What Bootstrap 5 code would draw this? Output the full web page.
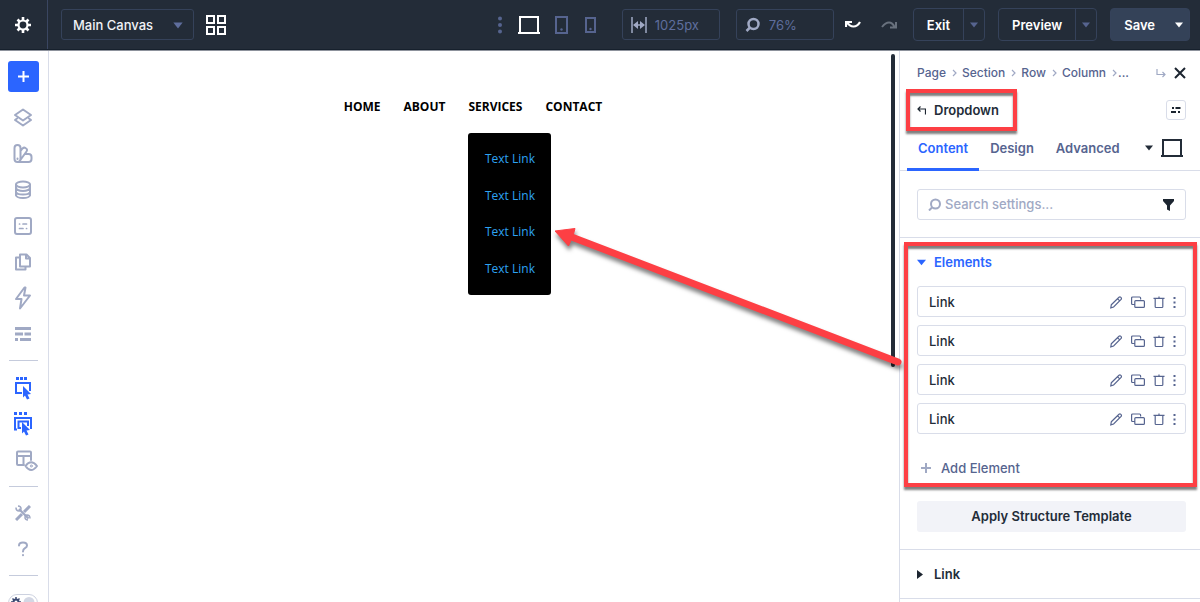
<!DOCTYPE html>
<html lang="en">
<head>
<meta charset="utf-8">
<meta name="viewport" content="width=device-width, initial-scale=1">
<title>Main Canvas</title>
<link href="https://cdn.jsdelivr.net/npm/bootstrap@5.3.0/dist/css/bootstrap.min.css" rel="stylesheet">
<style>
  :root { --ink:#232c38; --line:#d9dde9; --slate:#56648f; --mute:#a0a9c4; --blue:#2b65ff; --edge:#35425a; --alert:#fd3f44; }
  body { font-family:Inter, "Liberation Sans", sans-serif; font-size:13px; line-height:20px; font-weight:500; color:var(--ink); background:#fff; }
  button, input, select { font:inherit; color:inherit; }
  svg { display:block; flex:none; }
  .ico { fill:none; stroke:currentColor; stroke-width:2; stroke-linecap:round; stroke-linejoin:round; }
  .plain { background:none; border:0; padding:0; }

  /* top bar */
  .topbar { background:var(--ink); height:50px; border-bottom:1px solid #16202c; color:#fff; box-shadow:0 1px 0 #8d929c; z-index:2; }
  .gear-cell { width:48px; border-right:1px solid #3a4661; padding-right:1px; }
  .box { border:1px solid var(--edge); border-radius:3px; height:31px; color:var(--slate); }
  .canvas-pick { width:133px; position:relative; color:#fff; margin:0 12px 0 13px; }
  .canvas-pick select { appearance:none; background:none; border:0; width:100%; height:100%; padding:0 11px; color:#f0f2f6; }
  .canvas-pick svg { position:absolute; right:10px; top:12px; pointer-events:none; }
  .views { gap:15px; padding-right:24px; }
  .boxes { gap:16px; }
  .history { gap:20px; padding:0 16px 0 11px; }
  .actions { gap:13px; padding-right:10px; }
  .num-box { width:98px; }
  .num-box input { background:none; border:0; width:100%; min-width:0; padding:0; font-weight:400; color:#5f6e9d; }
  .top-btn { height:33px; border:1px solid var(--edge); border-radius:4px; overflow:hidden; font-weight:600; }
  .top-btn .wide { padding:0 13px; }
  .top-btn .arrow { width:21px; border-left:1px solid var(--edge); color:var(--slate); }
  .top-btn.filled { background:#344258; }
  .top-btn.filled .arrow { color:#fff; border-left:0; }

  /* left rail */
  .rail { width:49px; border-right:1px solid var(--line); padding:11px 2px 0 0; color:var(--mute); }
  .rail > * { flex:none; }
  .add-btn { width:31px; height:31px; background:var(--blue); border-radius:3px; color:#fff; margin-bottom:8px; }
  .rail-btn { width:46px; height:36px; display:flex; align-items:center; justify-content:center; color:inherit; }
  .rail-btn.on { color:var(--blue); }
  .rail hr { width:29px; margin:8px 0; border-top:1px solid #c5cbdc; opacity:1; }
  .rail hr:first-of-type { margin-bottom:9px; }
  .theme-switch { margin-top:10px; }

  /* canvas */
  .stage { position:relative; padding:47px 2px 0 0; }
  .site-nav { font:700 12px/20px "Open Sans", sans-serif; gap:23px; }
  .site-nav a { color:#000; text-decoration:none; display:block; }
  .submenu { position:absolute; top:36px; left:0; width:83px; height:162px; background:#000; border-radius:3px; padding:16px 0; font-weight:400; }
  .submenu a { color:#2ea3f2; text-align:center; }
  .thumb { position:absolute; right:4px; top:4px; width:4px; height:313px; border-radius:2px; background:var(--ink); }
  .pointer { position:absolute; right:-8px; top:174px; z-index:3; filter:drop-shadow(1px 4px 2px rgba(0,0,0,.5)); }

  /* settings panel */
  .panel { width:301px; border-left:1px solid var(--line); }
  .pad { padding-left:17px; padding-right:14px; }
  .crumbs { height:20px; margin-top:13px; color:var(--slate); font-size:12px; }
  .crumbs a { color:inherit; text-decoration:none; }
  .title-row { height:20px; margin-top:17px; font-weight:600; }
  .marked { position:relative; }
  .marked::after { content:""; position:absolute; inset:-11px -18px -11px -11px; border:4px solid var(--alert); box-shadow:0 3px 2px rgba(0,0,0,.5), inset 0 3px 2px rgba(0,0,0,.5); pointer-events:none; z-index:3; }
  .mini-box { width:20px; height:20px; border:1px solid var(--line); border-radius:3px; }
  .tab-row { margin-top:14px; height:37px; border-bottom:1px solid var(--line); padding-left:7px; padding-right:17px; }
  .tab-row .nav-link { padding:4px 11px 0; height:37px; color:var(--slate); font-weight:600; border-bottom:3px solid transparent; border-radius:0; }
  .tab-row .nav-link.active { color:var(--blue); border-color:var(--blue); }
  .device { height:28px; }
  .search-box { height:31px; border:1px solid var(--line); border-radius:3px; padding:0 10px; margin-top:18px; }
  .search-box input { border:0; padding:0 0 1px; outline:0; min-width:0; }
  .search-box input::placeholder { color:var(--mute); opacity:1; }
  .rule { border-top:1px solid var(--line); }
  .elements { margin-top:17px; position:relative; padding-top:14px; }
  .elements.marked::after { inset:4px 3px -9px 4px; }
  .sect { font-weight:600; gap:8px; }
  .sect.open { color:var(--blue); }
  .sect.closed { padding-top:14px; padding-bottom:14px; }
  .items { margin-top:14px; gap:8px; }
  .item { height:31px; border:1px solid var(--line); border-radius:3px; padding:0 9px 0 11px; }
  .item .tools { gap:8px; color:var(--slate); }
  .item button { color:inherit; padding-top:1px; }
  .add-el { margin-top:24px; color:var(--slate); gap:10px; }
  .apply { height:31px; width:100%; background:#f2f3f8; border-radius:3px; font-weight:600; margin:23px 0 17px; padding-bottom:1px; }
</style>
</head>
<body>
<svg width="0" height="0" class="position-absolute" aria-hidden="true">
  <symbol id="down" viewBox="0 0 8 6"><path d="M0 .5h8L4 5.5z" fill="currentColor"/></symbol>
  <symbol id="laptop" viewBox="0 0 22 18"><path d="M2 16V1h18v15M0 17h22" fill="none" stroke="currentColor" stroke-width="2"/></symbol>
  <symbol id="next" viewBox="0 0 8 8"><path d="m3 1 3 3-3 3" fill="none" stroke="#a0a9c4" stroke-width="1.2"/></symbol>
  <symbol id="pencil" viewBox="0 0 13 13"><path d="M1.3 8.8 9 1.3q.9-.8 1.9.1t.2 2L3.6 11l-2.8.8zM7.7 2.8l2 2" fill="none" stroke="currentColor" stroke-width="1.2"/></symbol>
  <symbol id="dup" viewBox="0 0 14 13"><path d="M3.500 8.500H1.600a1 1 0 0 1-1-1V2a1 1 0 0 1 1-1h7a1 1 0 0 1 1 1v1.500M4.800 4.600h7.600a1 1 0 0 1 1 1v4.800a1 1 0 0 1-1 1H4.800a1 1 0 0 1-1-1V5.600a1 1 0 0 1 1-1z" fill="none" stroke="currentColor" stroke-width="1.2"/></symbol>
  <symbol id="bin" viewBox="0 0 12 13"><path d="M.5 2.300h11M6 .5v1.800M2.200 2.500v8.200q0 .8.800.8h6q.8 0 .8-.8V2.500" fill="none" stroke="currentColor" stroke-width="1.2"/></symbol>
  <symbol id="dots" viewBox="0 0 3 13"><path d="M.5 1h2v2h-2zM.5 5.500h2v2h-2zM.5 10h2v2h-2z" fill="currentColor"/></symbol>
</svg>
<div class="d-flex flex-column vh-100 overflow-hidden">
  <header class="topbar d-flex align-items-center justify-content-between flex-shrink-0">
    <div class="d-flex align-items-center h-100">
      <div class="gear-cell h-100 d-flex align-items-center justify-content-center">
        <button class="plain" aria-label="Settings"><svg width="16" height="16" viewBox="0 0 16 16"><circle cx="8" cy="8" r="4.500" fill="none" stroke="#fff" stroke-width="2.200"/><path d="M8 0v3M8 13v3M0 8h3M13 8h3M2.500 2.500l2 2M11.500 11.500l2 2M13.500 2.500l-2 2M2.500 13.500l2-2" stroke="#fff" stroke-width="2.600"/></svg></button>
      </div>
      <div class="box canvas-pick">
        <select aria-label="Canvas"><option>Main Canvas</option></select>
        <svg width="10" height="7" color="#5f6e9d"><use href="#down"/></svg>
      </div>
      <button class="plain" aria-label="Canvas grid"><svg width="20" height="20" viewBox="0 0 20 20" fill="none" stroke="#fff" stroke-width="2"><path d="M1 1h7v7H1zM12 1h7v7h-7zM1 12h7v7H1zM12 12h7v7h-7z"/></svg></button>
    </div>
    <div class="d-flex align-items-center">
      <div class="views d-flex align-items-center">
        <button class="plain" aria-label="More views"><svg width="6" height="18" viewBox="0 0 6 18" fill="#56648f"><circle cx="3" cy="2.500" r="2"/><circle cx="3" cy="9" r="2"/><circle cx="3" cy="15.500" r="2"/></svg></button>
        <button class="plain text-white" aria-label="Desktop"><svg width="22" height="18"><use href="#laptop"/></svg></button>
        <button class="plain" aria-label="Tablet"><svg width="14" height="18" viewBox="0 0 14 18"><path d="M1 1h11v16H1z" fill="none" stroke="#56648f" stroke-width="2"/><circle cx="6.500" cy="13.500" r="1.200" fill="#56648f"/></svg></button>
        <button class="plain" aria-label="Phone"><svg width="14" height="18" viewBox="0 0 14 18"><path d="M2 2h9v14H2z" fill="none" stroke="#56648f" stroke-width="2"/><circle cx="6.500" cy="13" r="1.200" fill="#56648f"/></svg></button>
      </div>
      <div class="boxes d-flex">
        <label class="box num-box d-flex align-items-center ps-2 gap-2"><svg width="16" height="16" viewBox="0 0 16 16"><path d="M1 0v16M15 0v16M3 8h10" stroke="#a0a9c4" stroke-width="1.500"/><path d="M2 8l5-4v8zM14 8 9 4v8z" fill="#a0a9c4"/></svg><input value="1025px" aria-label="Width"></label>
        <label class="box num-box d-flex align-items-center ps-2 gap-2"><svg width="16" height="16" viewBox="0 0 16 16" fill="none" stroke="#a0a9c4" stroke-width="2.500"><circle cx="8.500" cy="7" r="5"/><path d="M5 10.500 1.500 14"/></svg><input value="76%" aria-label="Zoom"></label>
      </div>
      <div class="history d-flex align-items-center">
        <button class="plain" aria-label="Undo"><svg width="16" height="10" viewBox="0 0 16 10"><path d="M1 1v6M1 2h6M2 2q2.500 4.500 6.500 4.500T15 2" fill="none" stroke="#fff" stroke-width="2.200"/></svg></button>
        <button class="plain" aria-label="Redo"><svg width="16" height="10" viewBox="0 0 16 10"><path d="M15 2v6.500M9 7.500h6.500M13.500 7Q11.500 2.500 8 2.500T1 7" fill="none" stroke="#68717d" stroke-width="2"/></svg></button>
      </div>
      <div class="actions d-flex">
        <div class="top-btn d-flex"><button class="plain wide">Exit</button><button class="plain arrow d-flex align-items-center justify-content-center" aria-label="Exit options"><svg width="8" height="6"><use href="#down"/></svg></button></div>
        <div class="top-btn d-flex"><button class="plain wide">Preview</button><button class="plain arrow d-flex align-items-center justify-content-center" aria-label="Preview options"><svg width="8" height="6"><use href="#down"/></svg></button></div>
        <div class="top-btn filled d-flex"><button class="plain wide">Save</button><button class="plain arrow d-flex align-items-center justify-content-center" aria-label="Save options"><svg width="8" height="6"><use href="#down"/></svg></button></div>
      </div>
    </div>
  </header>

  <div class="d-flex flex-grow-1 overflow-hidden">
    <nav class="rail d-flex flex-column align-items-center flex-shrink-0 overflow-hidden" aria-label="Tools">
      <button class="plain add-btn d-flex align-items-center justify-content-center" aria-label="Add"><svg width="11" height="11" viewBox="0 0 11 11"><path d="M5.500 0v11M0 5.500h11" stroke="#fff" stroke-width="2"/></svg></button>
      <button class="plain rail-btn" aria-label="Layers"><svg class="ico" width="20" height="20" viewBox="0 0 20 20"><path d="M10 1.500 18 7l-8 5.500L2 7zM4 10.500 2 12l8 5.500 8-5.500-2-1.500"/></svg></button>
      <button class="plain rail-btn" aria-label="Presets"><svg class="ico" width="20" height="20" viewBox="0 0 20 20"><path d="M1.500 4a2.500 2.500 0 0 1 6 0v11a3 3 0 0 1-6 0zM8 6.500l1.500-2q1.500-1.500 3-.5 2.500 1.500 1 3.500L7 16.500M13 10h2.500a3 3 0 0 1 3 3v2q0 3-3 3h-11M4.500 14.500v.5"/></svg></button>
      <button class="plain rail-btn" aria-label="Data"><svg class="ico" width="18" height="20" viewBox="0 0 18 20"><ellipse cx="9" cy="4.500" rx="7" ry="3"/><path d="M2 4.500v11Q3 18 9 18t7-2.500v-11M2 8.200Q3 11 9 11t7-2.800M2 12Q3 14.600 9 14.600T16 12"/></svg></button>
      <button class="plain rail-btn" aria-label="Fields"><svg class="ico" width="18" height="18" viewBox="0 0 18 18"><rect x="1" y="1" width="16" height="16" rx="2"/><path d="M5.500 7h.1M9 7h3.500M5.500 11.500H9M12.500 11.500h.1" stroke-width="1.700"/></svg></button>
      <button class="plain rail-btn" aria-label="Pages"><svg class="ico" width="18" height="20" viewBox="0 0 18 20"><path d="M6 2.500h6.500L16 6v8.500H6zM12 3v3.500h4M5.500 5.500H2v12h9.500V15"/></svg></button>
      <button class="plain rail-btn" aria-label="Interactions"><svg class="ico" width="18" height="24" viewBox="0 0 18 24"><path d="M10.500 1.500 2 13h5.500L6 22.500 16 9.500h-6l1.500-8z"/></svg></button>
      <button class="plain rail-btn" aria-label="Outline"><svg width="16" height="16" viewBox="0 0 16 16" stroke="currentColor" stroke-width="3"><path d="M0 2.500h16M0 8h8M9.500 8H16M0 13.500h3M5 13.500h11"/></svg></button>
      <hr>
      <button class="plain rail-btn on" aria-label="Select"><svg width="18" height="24" viewBox="0 0 18 24"><path d="M2 2.500h3M6 2.500h3M10 2.500h3" stroke="currentColor" stroke-width="3"/><path d="M8 17H2V7h14v8" fill="none" stroke="currentColor" stroke-width="2"/><path d="m9 10 8 8-3.500.5 2 4-2.500 1-2-4-2 2z" fill="currentColor"/></svg></button>
      <button class="plain rail-btn on" aria-label="Multi select"><svg width="20" height="26" viewBox="0 0 20 26"><path d="M1 2.500h3M6 2.500h3M11 2.500h3" stroke="currentColor" stroke-width="3"/><path d="M4 18.500H2V7h16v11M8 17H5.500v-6.500H15V15" fill="none" stroke="currentColor" stroke-width="2"/><path d="m9 11 8 8-3.500.5 2 4-2.500 1-2-4-2 2z" fill="currentColor"/></svg></button>
      <button class="plain rail-btn" aria-label="Layout view"><svg class="ico ms-2" width="24" height="22" viewBox="0 0 24 22"><path d="M9 16H3q-1 0-1-1V3.500q0-1 1-1h12q1 0 1 1V11M2 7h14M8.500 7v9"/><path d="M10.500 17Q16 9.500 22 17q-6 8-11.500 0z"/><circle cx="16.300" cy="17" r="1" stroke-width="1"/></svg></button>
      <hr>
      <button class="plain rail-btn" aria-label="Utilities"><svg width="16" height="16" viewBox="0 0 16 16" fill="none" stroke="currentColor"><path d="M4 4l9.500 9.500" stroke-width="2.200"/><path d="M1 15 7 9M9 7l6-6" stroke-width="3"/><path d="M1 2.500q0 3.500 3 3.500 2-.2 2-2.500T3 1M15 13.500q0-3.500-3-3.500-2 .2-2 2.500t3 2.500" stroke-width="1.500"/></svg></button>
      <button class="plain rail-btn" aria-label="Help"><svg class="ico" width="12" height="16" viewBox="0 0 12 16"><path d="M2 4.500Q2 1.500 6 1.500t4 3Q10 6 8 7.200T6 10.500M6 14v.3"/></svg></button>
      <hr>
      <button class="plain theme-switch" aria-label="Theme"><svg width="30" height="18" viewBox="0 0 30 18"><rect x=".5" y=".5" width="29" height="17" rx="8.500" fill="#fff" stroke="#cdd2e0"/><circle cx="21" cy="8.500" r="5.500" fill="#d3d7e4"/><circle cx="8" cy="8" r="2.500" fill="none" stroke="#3c4a72" stroke-width="2"/><path d="M8 3v2M8 11v2M3 8h2M11 8h2M4.500 4.500 6 6M10 10l1.500 1.500M11.500 4.500 10 6M4.500 11.500 6 10" stroke="#3c4a72" stroke-width="1.500"/></svg></button>
    </nav>

    <main class="stage flex-grow-1">
      <ul class="site-nav list-unstyled d-flex justify-content-center m-0">
        <li><a href="#">HOME</a></li>
        <li><a href="#">ABOUT</a></li>
        <li class="position-relative"><a href="#">SERVICES</a>
          <div class="submenu d-flex flex-column justify-content-between"><a href="#">Text Link</a><a href="#">Text Link</a><a href="#">Text Link</a><a href="#">Text Link</a></div>
        </li>
        <li><a href="#">CONTACT</a></li>
      </ul>
      <div class="thumb"></div>
      <svg class="pointer" width="352" height="150" viewBox="0 0 352 150"><path d="M14 12 343 138" stroke="#fd3f44" stroke-width="7" stroke-linecap="round"/><path d="M0 7 20 4.500 18 12 13.500 22z" fill="#fd3f44" stroke="#fd3f44"/></svg>
    </main>

    <aside class="panel flex-shrink-0">
      <div class="pad crumbs d-flex align-items-center justify-content-between">
        <div class="d-flex align-items-center gap-1">
          <a href="#">Page</a><svg width="8" height="8"><use href="#next"/></svg>
          <a href="#">Section</a><svg width="8" height="8"><use href="#next"/></svg>
          <a href="#">Row</a><svg width="8" height="8"><use href="#next"/></svg>
          <a href="#">Column</a><span class="d-flex align-items-center"><svg width="8" height="8"><use href="#next"/></svg>...</span>
        </div>
        <div class="d-flex align-items-center gap-2">
          <svg width="10" height="9" viewBox="0 0 10 9" fill="none" stroke="#a0a9c4" stroke-width="1.200"><path d="M1 0v5.500h8M6.500 3 9 5.500 6.500 8"/></svg>
          <button class="plain" aria-label="Close"><svg width="12" height="12" viewBox="0 0 12 12" stroke="#1c2530" stroke-width="2"><path d="m1 1 10 10M11 1 1 11"/></svg></button>
        </div>
      </div>
      <div class="pad title-row d-flex align-items-center justify-content-between">
        <button class="plain marked d-flex align-items-center gap-2"><svg width="9" height="9" viewBox="0 0 9 9" fill="none" stroke="#1c2530" stroke-width="1.200"><path d="M8.500 8.500V3H1M3.500.5 1 3l2.500 2.500"/></svg>Dropdown</button>
        <button class="plain mini-box d-flex align-items-center justify-content-center" aria-label="Options"><svg width="10" height="8" viewBox="0 0 10 8" stroke="#1c2530" stroke-width="2"><path d="M1 2h2M4.500 2h5M0 6h5M7 6h2"/></svg></button>
      </div>
      <div class="tab-row d-flex justify-content-between">
        <div class="nav flex-nowrap"><a class="nav-link active" href="#">Content</a><a class="nav-link" href="#">Design</a><a class="nav-link" href="#">Advanced</a></div>
        <button class="plain device d-flex align-items-center gap-2" aria-label="Device"><svg width="8" height="6"><use href="#down"/></svg><svg width="22" height="18"><use href="#laptop"/></svg></button>
      </div>
      <div class="pad">
        <label class="search-box d-flex align-items-center gap-1 w-100"><svg width="13" height="13" viewBox="0 0 13 13" fill="none" stroke="#a0a9c4" stroke-width="2"><circle cx="7.500" cy="6" r="4.500"/><path d="M4 9.500 1 12.500"/></svg><input class="flex-grow-1" placeholder="Search settings..." aria-label="Search settings"><svg width="13" height="12" viewBox="0 0 13 12" fill="#1c2530"><path d="M1 0h11v2L8 6.500V12l-3-1.500v-4L1 2z"/></svg></label>
      </div>
      <section class="elements marked rule pad">
        <div class="sect open d-flex align-items-center"><svg width="9" height="7"><use href="#down"/></svg>Elements</div>
        <div class="items d-flex flex-column" id="items"></div>
        <button class="plain add-el d-flex align-items-center"><svg class="ms-1" width="10" height="10" viewBox="0 0 10 10" stroke="#a0a9c4" stroke-width="2"><path d="M5 0v10M0 5h10"/></svg>Add Element</button>
      </section>
      <div class="pad"><button class="plain apply">Apply Structure Template</button></div>
      <div class="pad rule sect closed d-flex align-items-center"><svg width="9" height="9" viewBox="0 0 9 9"><path d="M0 0v9l6-4.500z" fill="#1c2530"/></svg>Link</div>
      <div class="rule"></div>
    </aside>
  </div>
</div>
<script src="https://cdn.jsdelivr.net/npm/bootstrap@5.3.0/dist/js/bootstrap.bundle.min.js"></script>
<script>
  const tool = (id, w, label) => `<button class="plain" aria-label="${label}"><svg width="${w}" height="13"><use href="#${id}"/></svg></button>`;
  document.getElementById('items').innerHTML = ['Link', 'Link', 'Link', 'Link'].map(name =>
    `<div class="item d-flex align-items-center justify-content-between"><span>${name}</span>
      <div class="tools d-flex align-items-center">${tool('pencil', 13, 'Edit')}${tool('dup', 14, 'Duplicate')}${tool('bin', 12, 'Delete')}${tool('dots', 3, 'More')}</div></div>`).join('');
</script>
</body>
</html>
